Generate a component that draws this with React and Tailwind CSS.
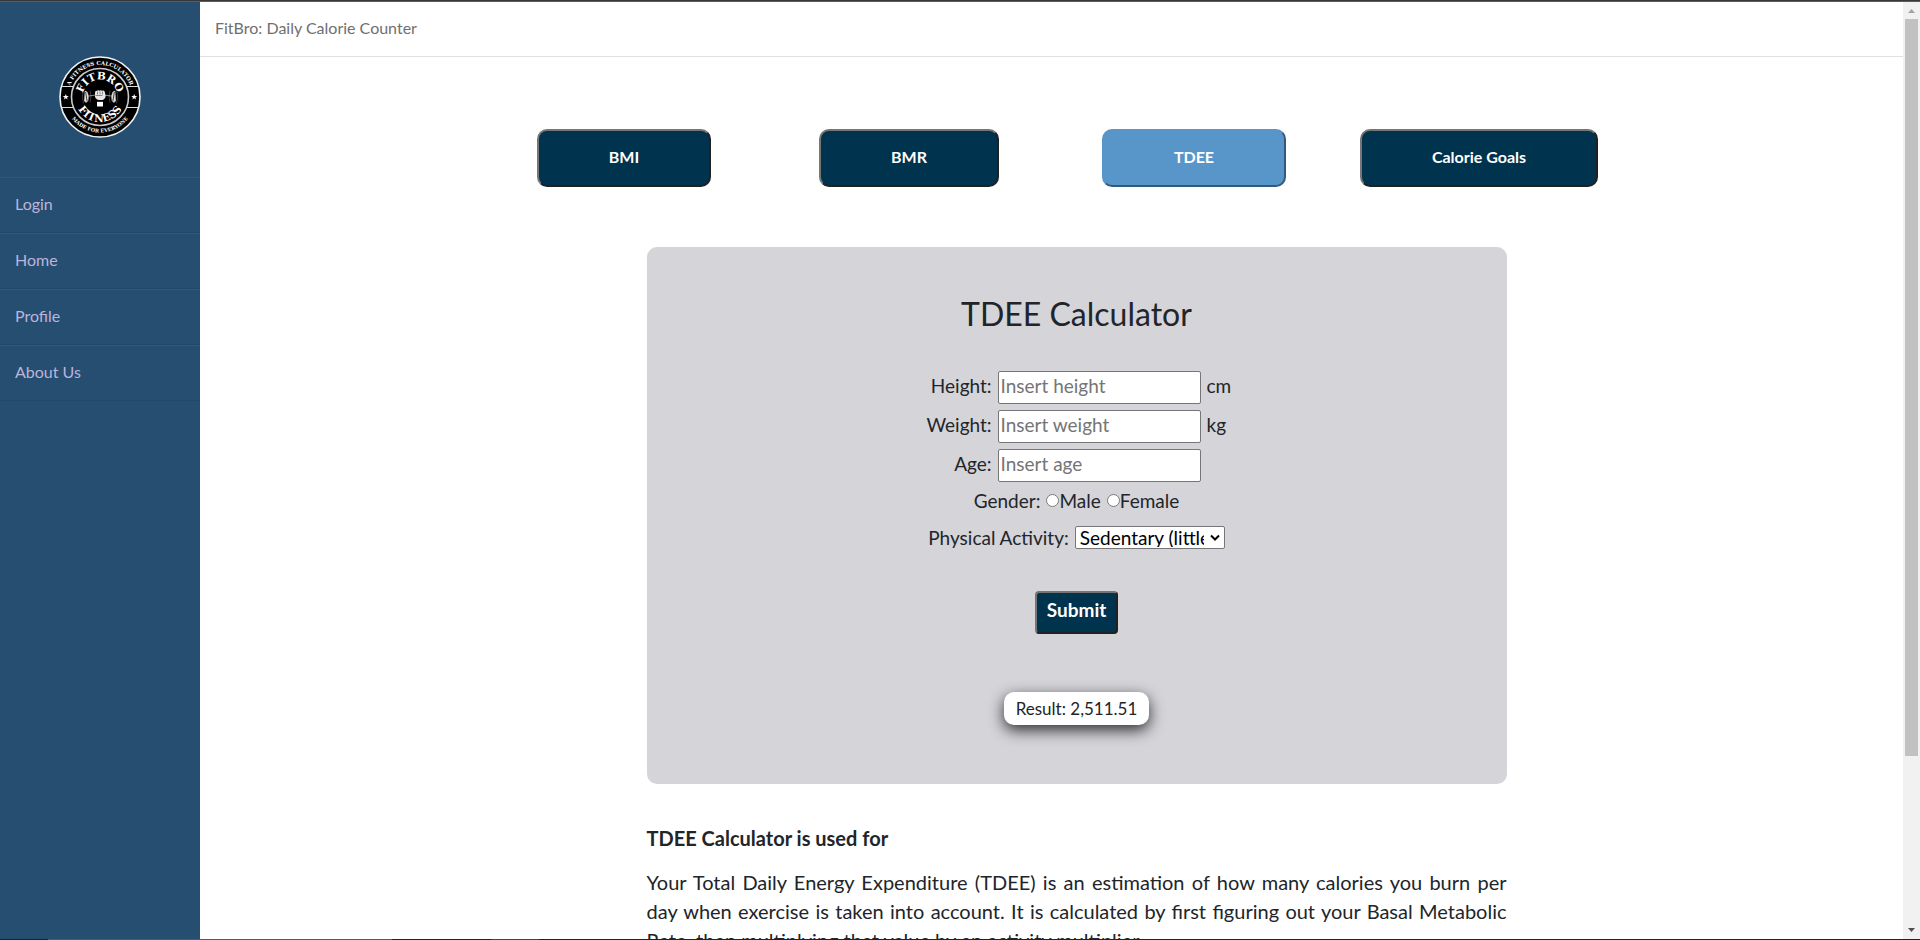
import { useState } from "react";

const links = ["Login", "Home", "Profile", "About Us"];
const tabs = ["BMI", "BMR", "TDEE", "Calorie Goals"];
const measures = [
  { id: "height", label: "Height:", hint: "Insert height", unit: "cm" },
  { id: "weight", label: "Weight:", hint: "Insert weight", unit: "kg" },
  { id: "age", label: "Age:", hint: "Insert age", unit: "" },
];

function Plates({ flip }) {
  return (
    <g transform={flip ? "matrix(-1 0 0 1 82 0)" : undefined} stroke="#fff" fill="none">
      <path d="M26 35l2.200 1 1.300 4-.5 5-2 1.500-1.600-1.500z" fill="#ddd" strokeWidth="0.4" />
      <path d="M26.600 36l1.600 9.500" stroke="#000" strokeWidth="0.700" />
      <path d="M24.500 33.500q-2.500 6.500 0 14M31 34.500q2 6 0 12" strokeWidth="0.5" opacity=".45" />
      <path d="M30 40l7-1" strokeWidth="0.900" opacity=".6" />
    </g>
  );
}

function Logo() {
  return (
    <svg viewBox="0 0 82 82" className="size-[82px]" role="img" aria-label="FitBro Fitness">
      <defs>
        <path id="outerTop" d="M9 41a32 32 0 0 1 64 0" />
        <path id="outerBottom" d="M5.500 41a35.500 35.500 0 0 0 71 0" />
        <path id="innerTop" d="M23.500 41a17.500 17.500 0 0 1 35 0" />
        <path id="innerBottom" d="M16 41a25 25 0 0 0 50 0" />
        <path id="star" d="M0-3l.8 2H3L1.200.400 1.900 2.600 0 1.300l-1.900 1.300.7-2.200L-3-1h2.200z" />
      </defs>
      <circle cx="41" cy="41" r="40" fill="#000" stroke="#f2f2f2" strokeWidth="1.6" />
      <circle cx="41" cy="41" r="28.500" fill="none" stroke="#ccc" strokeWidth="1.600" />
      <path d="M2.500 30.500h12M2.500 51.500h12M67.500 30.500h12M67.500 51.500h12" stroke="#ddd" strokeWidth="1.200" />
      <use href="#star" x="6.800" y="41" fill="#fff" />
      <use href="#star" x="75.200" y="41" fill="#fff" />
      <g fill="#fff" fontFamily="'DejaVu Serif', serif" fontWeight="700" textAnchor="middle">
        <text fontSize="5.400"><textPath href="#outerTop" startOffset="50%">A FITNESS CALCULATOR</textPath></text>
        <text fontSize="5"><textPath href="#outerBottom" startOffset="50%">MADE FOR EVERYONE</textPath></text>
        <text fontSize="10.500"><textPath href="#innerTop" startOffset="50%">FITBRO</textPath></text>
        <text fontSize="10.500"><textPath href="#innerBottom" startOffset="50%">FITNESS</textPath></text>
      </g>
      <Plates />
      <Plates flip />
      <path d="M36 36.500q0-2 2-1.800 1.200-1 2.400 0 1.300-.8 2.600 0 2.200-.6 2.800 1.200l.8 3.800q0 3-3 4.300h-4.200q-3.600-1.500-3.400-3.800z" fill="#e8e8e8" />
      <path d="M38.500 35.500v3M41 35.500v3M43.500 35.500v3M36.500 39.500h7" stroke="#444" strokeWidth=".6" />
      <path d="M38 45.500h6v5h-6z" fill="#fff" />
      <path d="M38 45.300h6" stroke="#000" strokeWidth=".8" />
    </svg>
  );
}

function Sidebar() {
  return (
    <nav className="w-[200px] shrink-0 bg-[#264e70]">
      <div className="flex h-[175px] justify-center pt-[54px]">
        <Logo />
      </div>
      {links.map((name) => (
        <a
          key={name}
          href="#"
          className="block h-14 border-t border-b border-t-[#30587b] border-b-[#22476a] px-[15px] pt-[14px] leading-6 text-[#bbb4dc]"
        >
          {name}
        </a>
      ))}
    </nav>
  );
}

function ScrollTrack() {
  return (
    <div aria-hidden="true" className="flex w-[17px] shrink-0 flex-col items-center bg-[#f1f1f1]">
      <svg viewBox="0 0 17 17" className="size-[17px] shrink-0"><path d="M5 11h7L8.500 7z" fill="#a3a3a3" /></svg>
      <div className="w-[13px] grow-[737] bg-[#c1c1c1]" />
      <div className="grow-[166]" />
      <svg viewBox="0 0 17 17" className="size-[17px] shrink-0"><path d="M5 6h7l-3.500 4z" fill="#505050" /></svg>
    </div>
  );
}

function Calculator() {
  const [gender, setGender] = useState("");
  return (
    <form
      onSubmit={(e) => e.preventDefault()}
      className="flex flex-col items-center rounded-[10px] bg-[#d5d4d9] pt-12 pb-[59px] text-[19px] leading-[29px]"
    >
      <h1 className="text-[32px] leading-[38px]">TDEE Calculator</h1>
      <div className="mt-[38px] grid grid-cols-[auto_203px_20px] gap-[6px]">
        {measures.map(({ id, label, hint, unit }) => (
          <div key={id} className="contents">
            <label htmlFor={id} className="text-right">{label}</label>
            <input
              id={id}
              placeholder={hint}
              className="h-[33px] rounded-[2px] border border-[#767676] bg-white px-[2px] pb-1 placeholder:text-[#757575]"
            />
            <span>{unit}</span>
          </div>
        ))}
      </div>
      <fieldset className="mt-1 flex items-center gap-[6px]">
        <legend className="float-left">Gender:</legend>
        {["Male", "Female"].map((g) => (
          <label key={g} className="flex items-center">
            <input type="radio" name="gender" checked={gender === g} onChange={() => setGender(g)} className="size-[13px]" />
            {g}
          </label>
        ))}
      </fieldset>
      <div className="mt-2 flex items-center gap-[6px]">
        <label htmlFor="activity">Physical Activity:</label>
        <div className="relative flex">
          <select
            id="activity"
            className="h-[23px] w-[150px] appearance-none rounded-[2px] border border-[#767676] bg-white pr-5 pl-1 leading-[19px] text-black"
          >
            <option>Sedentary (little or no exercise)</option>
            <option>Lightly active</option>
            <option>Moderately active</option>
            <option>Very active</option>
          </select>
          <svg viewBox="0 0 10 8" className="pointer-events-none absolute top-2 right-[5px] h-2 w-[10px]" aria-hidden="true">
            <path d="M1 1.500l4 4 4-4" fill="none" stroke="#000" strokeWidth="2" />
          </svg>
        </div>
      </div>
      <button className="mt-[39px] h-[43px] rounded-[4px] border-2 border-t-[#767676] border-r-[#212121] border-b-[#212121] border-l-[#767676] bg-[#00334e] px-[10px] pb-[6px] font-bold text-white">
        Submit
      </button>
      <output className="mt-[58px] h-[33px] rounded-[10px] bg-white px-3 pt-[2px] text-[17px] shadow-[0_5px_15px_rgba(0,0,0,0.8)]">
        Result: 2,511.51
      </output>
    </form>
  );
}

export default function App() {
  return (
    <div className="flex h-screen flex-col overflow-hidden bg-white font-['Lato',sans-serif] text-base text-[#212529]">
      <div className="h-[2px] shrink-0 border-b border-[#5c595b] bg-[#3a3738]" />
      <div className="flex min-h-0 grow">
        <Sidebar />
        <main className="min-w-0 grow overflow-hidden">
          <header className="h-[55px] border-b border-[#dee2e6] px-[15px] pt-[14px] leading-6 text-[#6f6f6f]">
            FitBro: Daily Calorie Counter
          </header>
          <div className="mx-auto max-w-[1140px] pt-[72px]">
            <div className="grid grid-cols-4 justify-items-center">
              {tabs.map((tab) =>
                tab === "TDEE" ? (
                  <button
                    key={tab}
                    className="h-[58px] rounded-[10px] border-2 border-t-[#5895c9] border-r-[#34597a] border-b-[#34597a] border-l-[#5895c9] bg-[#5895c9] px-[70px] pb-[2px] font-bold text-white"
                  >
                    {tab}
                  </button>
                ) : (
                  <button
                    key={tab}
                    className="h-[58px] rounded-[10px] border-2 border-t-[#767676] border-r-[#212121] border-b-[#212121] border-l-[#767676] bg-[#00334e] px-[70px] pb-[2px] font-bold text-white"
                  >
                    {tab}
                  </button>
                ),
              )}
            </div>
            <div className="mt-[60px] mr-[115px] ml-[165px]">
              <Calculator />
              <section className="pt-10 text-xl leading-[29px]">
                <h2 className="font-bold">TDEE Calculator is used for</h2>
                <p className="mt-[15px] text-justify">
                  Your Total Daily Energy Expenditure (TDEE) is an estimation of how many calories you burn per day when
                  exercise is taken into account. It is calculated by first figuring out your Basal Metabolic Rate, then
                  multiplying that value by an activity multiplier.
                </p>
              </section>
            </div>
          </div>
        </main>
        <ScrollTrack />
      </div>
      <div className="flex h-px shrink-0 bg-[#222]">
        <div className="ml-12 w-[344px] bg-[#5a5a5a]" />
        <div className="ml-[99px] w-12 bg-[#444]" />
      </div>
    </div>
  );
}
